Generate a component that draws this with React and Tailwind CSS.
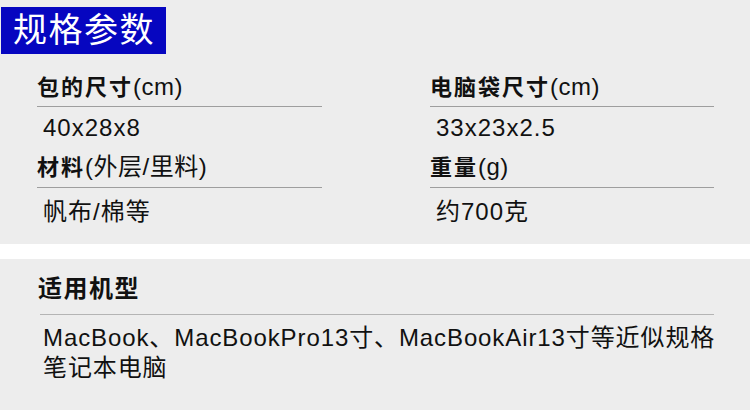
const font = { fontFamily: '"Liberation Sans", "Noto Sans CJK SC", sans-serif' };

const Spec = ({ label, unit, value, first }) => (
  <div className={first ? "" : "mt-[9px]"}>
    <div className={(first ? "h-[35px]" : "h-[36px]") + " leading-[30px] border-b border-[#9e9e9e] text-[#111] whitespace-nowrap"}>
      <span className="font-bold text-[22px] tracking-[2px]">{label}</span>
      <span className="text-[24px] tracking-[0.5px]">{unit}</span>
    </div>
    <div className={(first ? "mt-[6px]" : "mt-[9px]") + " h-[30px] pl-[6px] text-[24px] leading-[30px] tracking-[1px] text-[#111]"}>
      {value}
    </div>
  </div>
);

export default function App() {
  return (
    <div style={font} className="w-[750px] h-[410px] bg-white overflow-hidden">
      <div className="h-[244px] bg-[#ededed] pt-[7px]">
        <div className="ml-[1px] w-[165px] h-[47px] bg-[#0606c0] pl-[12px] text-white text-[34px] leading-[47px] tracking-[1.5px]">
          规格参数
        </div>
        <div className="mt-[18px] flex">
          <div className="ml-[37px] w-[285px]">
            <Spec first label="包的尺寸" unit="(cm)" value="40x28x8" />
            <Spec label="材料" unit="(外层/里料)" value="帆布/棉等" />
          </div>
          <div className="ml-[108px] w-[284px]">
            <Spec first label="电脑袋尺寸" unit="(cm)" value="33x23x2.5" />
            <Spec label="重量" unit="(g)" value="约700克" />
          </div>
        </div>
      </div>
      <div className="mt-[15px] h-[151px] bg-[#ededed] pt-[14px] pl-[38px] pr-[28px]">
        <div className="text-[24px] leading-[32px] tracking-[1.5px] font-bold text-[#111]">适用机型</div>
        <div className="ml-[2px] mr-[8px] mt-[9px] border-t border-[#b4b4b4]" />
        <div className="mt-[8px] pl-[5px] text-[24px] leading-[30px] tracking-[0.9px] text-[#111]">
          MacBook、MacBookPro13寸、MacBookAir13寸等近似规格
          <br />
          笔记本电脑
        </div>
      </div>
    </div>
  );
}
